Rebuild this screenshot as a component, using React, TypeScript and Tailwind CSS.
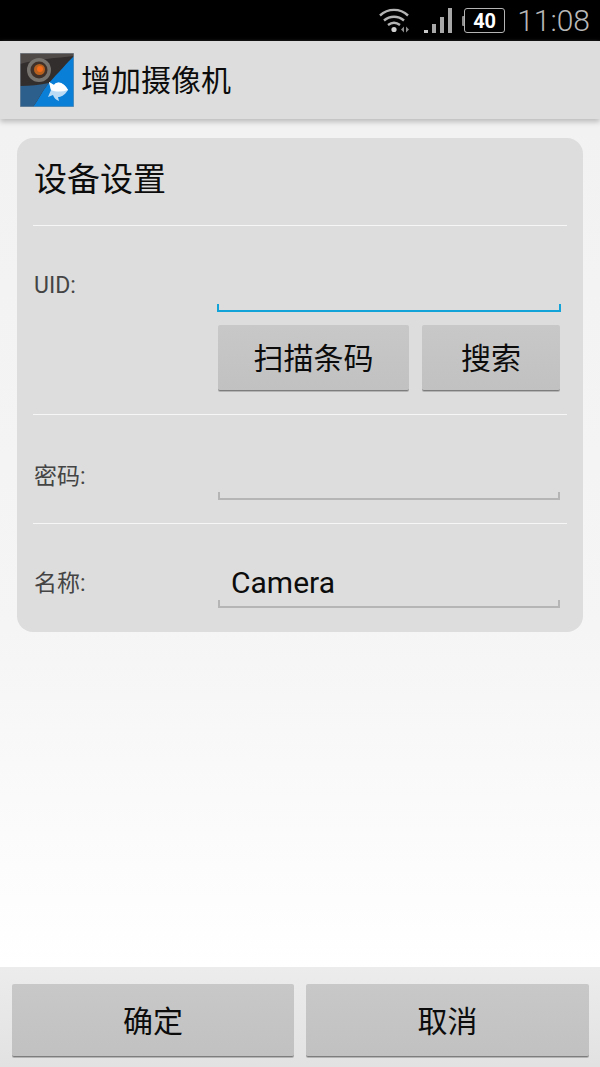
const cjk = { fontFamily: 'Roboto, "Noto Sans CJK SC", sans-serif' };

function StatusBar() {
  return (
    <div className="flex h-[41px] shrink-0 items-center justify-end bg-black pr-[10px]">
      <svg width="31" height="26" viewBox="0 0 31 26" fill="none" className="mr-[14px] mt-[-1px]">
        <path d="M1 8.5C9 1 21 1 29 8.5" stroke="#b4b4b4" strokeWidth="2.4" />
        <path d="M5 13.5C11 8.5 19 8.5 25 13.5" stroke="#b4b4b4" strokeWidth="2.4" />
        <path d="M9 18C13 15 17 15 21 18" stroke="#b4b4b4" strokeWidth="2.4" />
        <circle cx="15" cy="22.5" r="2.6" fill="#d0d0d0" />
        <path d="M25 19.5v6l-3-3zM27 19.5v6l3-3z" fill="#8c8c8c" />
      </svg>
      <div className="mr-[10px] flex h-[25px] items-end gap-[4px]">
        <div className="h-[3px] w-[4px] bg-[#c8c8c8]" />
        <div className="h-[9px] w-[4px] bg-[#a8a8a8]" />
        <div className="h-[16px] w-[4px] bg-[#a8a8a8]" />
        <div className="h-[25px] w-[4px] bg-[#a8a8a8]" />
      </div>
      <div className="mr-[12px] flex items-center">
        <div className="h-[10px] w-[2px] rounded-l-[1px] bg-[#8c8c8c]" />
        <div className="flex h-[25px] w-[41px] items-center justify-center rounded-[3px] border border-[#b4b4b4] text-[20px] font-bold leading-none text-white" style={{ fontFamily: 'Roboto, sans-serif' }}>
          40
        </div>
      </div>
      <span className="text-[30px] font-light leading-none text-[#b8b8b8]" style={{ fontFamily: 'Roboto, sans-serif' }}>11:08</span>
    </div>
  );
}

function AppLogo() {
  return (
    <svg width="54" height="54" viewBox="0 0 54 54" className="shrink-0">
      <rect width="54" height="54" fill="#0a7fd8" />
      <path d="M0 0H54V3C48 9 38 20 28 31C22 38 19 46 13 54H0Z" fill="#322e2d" />
      <path d="M0 0H54V3C36 5 18 6 0 11Z" fill="#4f4a48" />
      <path d="M0 33C10 33 20 32 29 30C22 38 19 46 13 54H0Z" fill="#2c5f8c" />
      <circle cx="19" cy="17" r="12" fill="#77736f" />
      <circle cx="19" cy="17" r="8.5" fill="#3f3129" />
      <circle cx="19.5" cy="16.5" r="5.5" fill="#b5601f" />
      <circle cx="20" cy="16" r="3" fill="#f26a1a" />
      <path d="M29 29L34 32C38 27 44 30 48 37C44 43 41 44 38 44L39 48C36 47 34 45 33 42L28 44L31 37Z" fill="#bcdcf5" />
      <path d="M29 29L34 32C38 27 44 30 48 37C42 39 36 39 31 37Z" fill="#ffffff" />
      <rect x="0.25" y="0.25" width="53.5" height="53.5" fill="none" stroke="#8f9aa3" strokeWidth="0.5" />
    </svg>
  );
}

function TextField({ value, focused }: { value?: string; focused?: boolean }) {
  const line = focused ? 'border-[#12a3d8]' : 'border-[#b5b5b5]';
  const tick = focused ? 'bg-[#12a3d8]' : 'bg-[#b5b5b5]';
  return (
    <div className={`relative ml-auto flex h-[46px] items-center border-b-2 pb-[2px] pl-[13px] text-[30px] leading-none text-[#0c0c0c] ${line} ${focused ? 'w-[344px]' : 'mr-[1px] w-[342px]'}`}>
      <span className={`absolute bottom-0 left-0 h-[6px] w-[2px] ${tick}`} />
      <span className={`absolute bottom-0 right-0 h-[6px] w-[2px] ${tick}`} />
      {value}
    </div>
  );
}

function GreyButton({ label, className }: { label: string; className: string }) {
  return (
    <button className={`flex items-center justify-center rounded-[2px] border-b border-[#7d7d7d] bg-gradient-to-b from-[#c8c8c8] to-[#c1c1c1] pt-[3px] text-[30px] leading-none text-[#0c0c0c] shadow-[0_1px_0_#b4b4b4] ${className}`}>
      {label}
    </button>
  );
}

function Divider() {
  return <div className="mx-4 h-[1px] bg-[#f6f6f6]" />;
}

export default function App() {
  return (
    <div className="flex h-[1067px] w-[600px] flex-col overflow-hidden bg-white" style={cjk}>
      <StatusBar />
      <div className="relative z-10 flex h-[78px] shrink-0 items-center gap-[7px] bg-[#dddddd] pl-5 shadow-[0_3px_5px_#bdbdbd]">
        <AppLogo />
        <h1 className="pt-[2px] text-[30px] font-normal leading-none text-[#0c0c0c]">增加摄像机</h1>
      </div>

      <main className="flex-1 bg-gradient-to-b from-[#f2f2f2] via-[#f5f5f5] via-60% to-white px-[17px] pt-[19px]">
        <div className="flex h-[494px] flex-col rounded-[16px] bg-[#dddddd]">
          <div className="flex h-[87px] shrink-0 items-center pb-[4px] pl-[17px] text-[33px] leading-none text-[#0c0c0c]">设备设置</div>
          <Divider />
          <div className="h-[188px] shrink-0 pl-4 pr-[22px] pt-[40px]">
            <div className="relative">
              <span className="absolute left-[1px] top-[8px] text-[23px] leading-none text-[#444]">UID:</span>
              <TextField focused />
            </div>
            <div className="ml-auto mt-[13px] flex w-[344px] gap-[13px] pr-[1px] pl-[1px]">
              <GreyButton label="扫描条码" className="h-[66px] w-[191px]" />
              <GreyButton label="搜索" className="h-[66px] w-[138px]" />
            </div>
          </div>
          <Divider />
          <div className="h-[108px] shrink-0 pl-4 pr-[22px] pt-[39px]">
            <div className="relative">
              <span className="absolute left-[1px] top-[11px] text-[23px] leading-none text-[#444]">密码:</span>
              <TextField />
            </div>
          </div>
          <Divider />
          <div className="shrink-0 pl-4 pr-[22px] pt-[38px]">
            <div className="relative">
              <span className="absolute left-[1px] top-[10px] text-[23px] leading-none text-[#444]">名称:</span>
              <TextField value="Camera" />
            </div>
          </div>
        </div>
      </main>

      <div className="flex h-[100px] shrink-0 gap-3 bg-gradient-to-b from-[#ececec] to-[#e2e2e2] pl-3 pt-[17px]">
        <GreyButton label="确定" className="h-[73px] w-[282px]" />
        <GreyButton label="取消" className="h-[73px] w-[283px]" />
      </div>
    </div>
  );
}
